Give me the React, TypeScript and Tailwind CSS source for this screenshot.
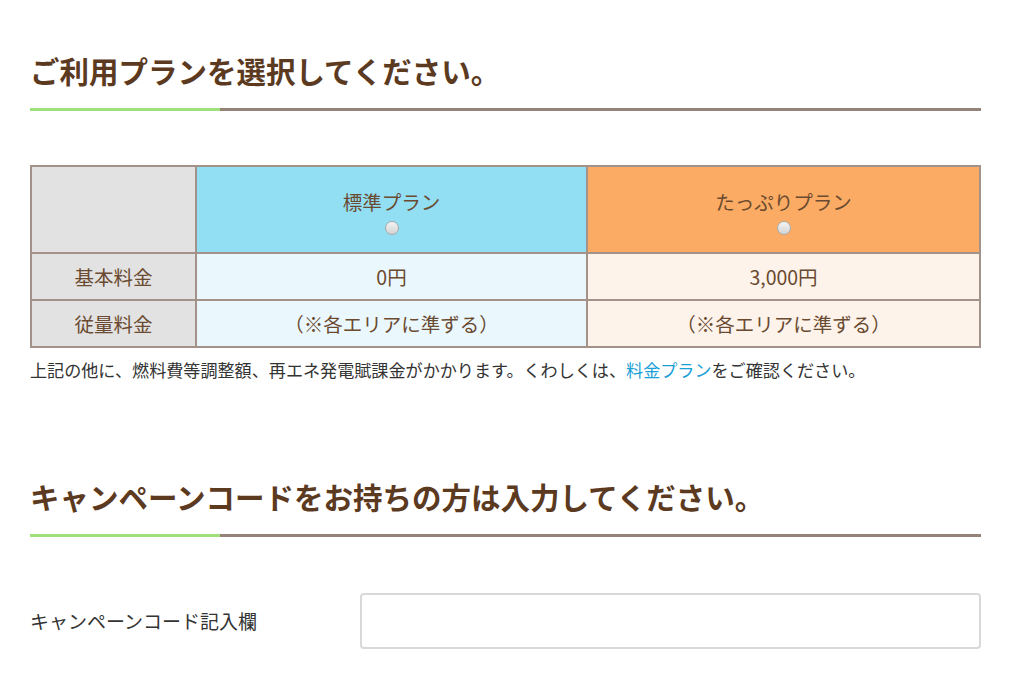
const FONT = { fontFamily: '"Noto Sans CJK JP", "Noto Sans", sans-serif' };

function SectionTitle({ children }: { children: React.ReactNode }) {
  return (
    <div>
      <h2 className="text-[29.5px] font-bold leading-[40px] text-[#5b3a1f]">{children}</h2>
      <div className="mt-[18px] flex h-[3px]">
        <div className="w-[190px] bg-[#9fe07d]" />
        <div className="flex-1 bg-[#948379]" />
      </div>
    </div>
  );
}

function Radio() {
  return (
    <span className="mx-auto mt-[7px] block h-[14px] w-[14px] rounded-full border-[1.5px] border-[#a9a9a9] bg-gradient-to-b from-[#f4f4f4] to-[#d4d4d4]" />
  );
}

const CELL = "border-2 border-[#a39289] text-center";

export default function App() {
  return (
    <main className="min-h-[686px] bg-white" style={FONT}>
      <div className="ml-[30px] w-[951px] pt-[50px]">
        <SectionTitle>ご利用プランを選択してください。</SectionTitle>

        <table className="mt-[54px] w-full border-collapse border-2 border-[#a39289] text-[19.5px] text-[#6a4a30]">
          <tbody>
            <tr className="h-[87px]">
              <td className={`${CELL} w-[165px] bg-[#e2e2e2]`} />
              <td className={`${CELL} w-[391px] bg-[#92dff3] pt-[6px]`}>
                <div className="leading-[24px]">標準プラン</div>
                <Radio />
              </td>
              <td className={`${CELL} bg-[#fbab63] pt-[6px]`}>
                <div className="leading-[24px]">たっぷりプラン</div>
                <Radio />
              </td>
            </tr>
            <tr className="h-[47px]">
              <td className={`${CELL} bg-[#e2e2e2]`}>基本料金</td>
              <td className={`${CELL} bg-[#eaf8fd]`}>0円</td>
              <td className={`${CELL} bg-[#fdf3ea]`}>3,000円</td>
            </tr>
            <tr className="h-[47px]">
              <td className={`${CELL} bg-[#e2e2e2]`}>従量料金</td>
              <td className={`${CELL} bg-[#eaf8fd]`}>（※各エリアに準ずる）</td>
              <td className={`${CELL} bg-[#fdf3ea]`}>（※各エリアに準ずる）</td>
            </tr>
          </tbody>
        </table>

        <p className="mt-[10px] text-[17.1px] leading-[24px] text-[#333333]">
          上記の他に、燃料費等調整額、再エネ発電賦課金がかかります。くわしくは、
          <a className="text-[#1aa0d6]">料金プラン</a>をご確認ください。
        </p>

        <div className="mt-[94px]">
          <SectionTitle>キャンペーンコードをお持ちの方は入力してください。</SectionTitle>
        </div>

        <div className="mt-[56px] flex items-center">
          <label className="w-[330px] text-[19px] text-[#333333]">キャンペーンコード記入欄</label>
          <input
            type="text"
            className="h-[56px] flex-1 rounded-[4px] border-2 border-[#d9d9d9] bg-white px-3 outline-none"
          />
        </div>
      </div>
    </main>
  );
}
